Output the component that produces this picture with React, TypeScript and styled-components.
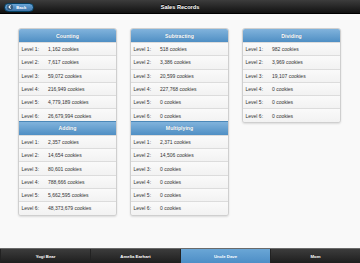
import styled, { createGlobalStyle } from "styled-components";

interface Level {
  level: number;
  cookies: string;
}

interface Group {
  title: string;
  levels: Level[];
}

const toLevels = (values: string[]): Level[] =>
  values.map((cookies, i) => ({ level: i + 1, cookies }));

const columns: Group[][] = [
  [
    {
      title: "Counting",
      levels: toLevels(["1,162", "7,617", "59,072", "216,949", "4,779,189", "26,679,994"]),
    },
    {
      title: "Adding",
      levels: toLevels(["2,357", "14,654", "80,601", "788,666", "5,662,595", "48,373,679"]),
    },
  ],
  [
    {
      title: "Subtracting",
      levels: toLevels(["518", "3,386", "20,599", "227,768", "0", "0"]),
    },
    {
      title: "Multiplying",
      levels: toLevels(["2,371", "14,506", "0", "0", "0", "0"]),
    },
  ],
  [
    {
      title: "Dividing",
      levels: toLevels(["982", "3,969", "19,107", "0", "0", "0"]),
    },
  ],
];

const tabs = ["Yogi Bear", "Amelia Earhart", "Uncle Dave", "Mom"];

function App() {
  return (
    <Page>
      <GlobalStyle />
      <Header>
        <BackButton>
          <svg width="6" height="6" viewBox="0 0 10 10">
            <circle cx="5" cy="5" r="5" fill="rgba(0,0,0,0.35)" />
            <path d="M6 2.4 L3.4 5 L6 7.6" stroke="#fff" strokeWidth="1.8" fill="none" />
          </svg>
          <BackText>Back</BackText>
        </BackButton>
        <Title>Sales Records</Title>
      </Header>

      <Content>
        {columns.map((groups, c) => (
          <Card key={c}>
            {groups.map((group) => (
              <div key={group.title}>
                <Divider>{group.title}</Divider>
                {group.levels.map((l) => (
                  <Row key={l.level}>
                    <Label>Level {l.level}:</Label>
                    <span>{l.cookies} cookies</span>
                  </Row>
                ))}
              </div>
            ))}
          </Card>
        ))}
      </Content>

      <TabBar>
        {tabs.map((t) => (
          <Tab key={t} $active={t === "Uncle Dave"}>
            {t}
          </Tab>
        ))}
      </TabBar>
    </Page>
  );
}

const GlobalStyle = createGlobalStyle`
  html, body {
    margin: 0;
    padding: 0;
    height: 100%;
    background: #f9f9f9;
  }
  #root {
    height: 100%;
  }
`;

const Page = styled.div`
  display: flex;
  flex-direction: column;
  height: 100vh;
  font-family: "Liberation Sans", Arial, sans-serif;
  background: #f9f9f9;
`;

const Header = styled.div`
  position: relative;
  height: 14px;
  display: flex;
  align-items: center;
  justify-content: center;
  background: linear-gradient(#3c3c3c, #111);
  border-bottom: 1px solid #000;
  box-sizing: border-box;
`;

const BackButton = styled.div`
  position: absolute;
  left: 4px;
  top: 2.5px;
  width: 30px;
  height: 9px;
  box-sizing: border-box;
  display: flex;
  align-items: center;
  padding-left: 1.5px;
  border-radius: 5px;
  border: 1px solid #044062;
  background: linear-gradient(#6aa6d8, #3d74a8);
  color: #fff;
  font-size: 4.2px;
  font-weight: bold;
`;

const BackText = styled.span`
  flex: 1;
  text-align: center;
  padding-right: 3px;
`;

const Title = styled.div`
  color: #fff;
  font-size: 5.6px;
  font-weight: bold;
  text-shadow: 0 -1px 0 #000;
`;

const Content = styled.div`
  flex: 1;
  display: grid;
  grid-template-columns: repeat(3, 99px);
  column-gap: 13px;
  align-items: start;
  padding: 14px 0 0 18px;
`;

const Card = styled.div`
  border: 1px solid #cfcfcf;
  border-radius: 3px;
  overflow: hidden;
  box-shadow: 0 1px 2px rgba(0, 0, 0, 0.12);
  background: #f6f6f6;
`;

const Divider = styled.div`
  height: 13px;
  display: flex;
  align-items: center;
  justify-content: center;
  background: linear-gradient(#81b3dc, #4f8fc4);
  border-top: 1px solid #4b88b8;
  margin-top: -1px;
  color: #fff;
  font-size: 5.2px;
  font-weight: bold;
  text-shadow: 0 0 1px rgba(0, 0, 0, 0.25);
`;

const Row = styled.div`
  height: 13.3px;
  box-sizing: border-box;
  display: flex;
  align-items: center;
  padding-left: 2.5px;
  border-top: 1px solid #dcdcdc;
  background: linear-gradient(#fafafa, #f2f2f2);
  color: #333;
  font-size: 5px;
`;

const Label = styled.span`
  width: 26.5px;
`;

const TabBar = styled.div`
  height: 15px;
  display: grid;
  grid-template-columns: repeat(4, 1fr);
  background: linear-gradient(#3c3c3c, #1e1e1e);
  border-top: 1px solid #6a6a6a;
  box-sizing: border-box;
`;

const Tab = styled.div<{ $active: boolean }>`
  display: flex;
  align-items: center;
  justify-content: center;
  color: #fff;
  font-size: 4.3px;
  font-weight: bold;
  border-left: 1px solid #222;
  background: ${(p) => (p.$active ? "linear-gradient(#6aa6d6, #4d8ec6)" : "transparent")};
`;

export default App;
